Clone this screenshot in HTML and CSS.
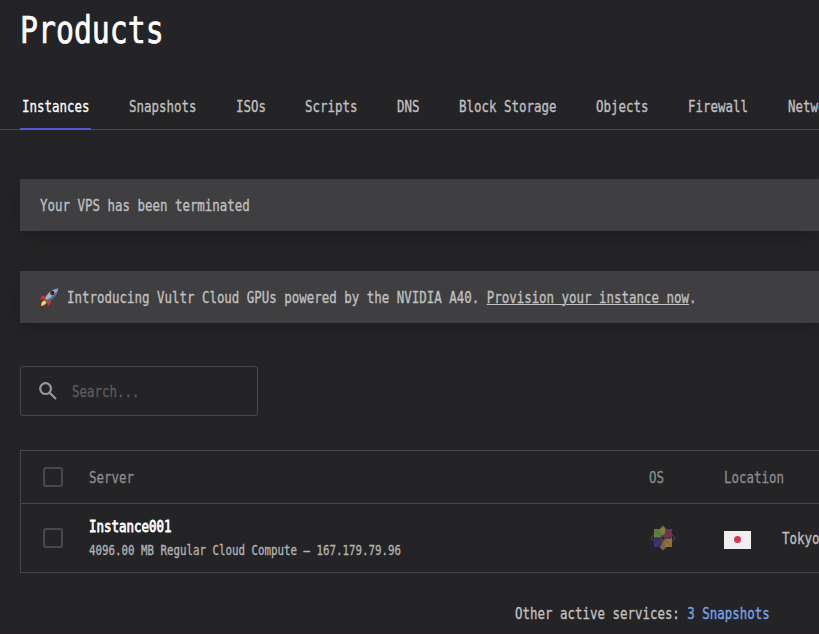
FILE: index.html
```html
<!DOCTYPE html>
<html lang="en">
<head>
<meta charset="utf-8">
<title>Products</title>
<link rel="stylesheet" href="styles.css">
</head>
<body>
<div class="page">
  <h1 class="title"><span class="t">Products</span></h1>
  <nav class="tabs">
    <a class="tab active" style="--n:9"><span class="t">Instances</span></a>
    <a class="tab" style="--n:9"><span class="t">Snapshots</span></a>
    <a class="tab" style="--n:4"><span class="t">ISOs</span></a>
    <a class="tab" style="--n:7"><span class="t">Scripts</span></a>
    <a class="tab" style="--n:3"><span class="t">DNS</span></a>
    <a class="tab" style="--n:13"><span class="t">Block Storage</span></a>
    <a class="tab" style="--n:7"><span class="t">Objects</span></a>
    <a class="tab" style="--n:8"><span class="t">Firewall</span></a>
    <a class="tab" style="--n:7"><span class="t">Network</span></a>
  </nav>
  <div class="banner first"><span class="t">Your VPS has been terminated</span></div>
  <div class="banner second">
    <svg class="rocket" viewBox="0 0 20 20">
      <path d="M6 8.5 2 8 0 12 5 11.5ZM11 13 12 15 9 19 7 15Z" fill="#d92b38"/>
      <path d="M5 12.5Q1 14 1 19Q5 19 7 15Z" fill="#f5bd36"/>
      <path d="M4 14Q2 15 2 18Q4 17 6 15Z" fill="#ffe16b"/>
      <path d="M5 11.5Q9 2 19 .5Q18 10 8 14.5Z" fill="#9ab6ca"/>
      <path d="M8 12Q16 8 19 .5Q18 10 8 14.5L5 11.5Z" fill="#3f6a8c"/>
      <path d="M14.5 1.8 19 .5 18 5Z" fill="#7ea5d6"/>
      <circle cx="13" cy="5.3" r="2.5" fill="#6b2a24"/>
      <circle cx="13.4" cy="5" r="1.3" fill="#1d2027"/>
    </svg>
    <span class="t">Introducing Vultr Cloud GPUs powered by the NVIDIA A40. <a class="provision">Provision your instance now</a>.</span>
  </div>
  <div class="search">
    <svg class="glass" viewBox="0 0 18 18"><circle cx="6.6" cy="6.6" r="5.4"/><path d="M10.5 10.5 17 17"/></svg>
    <span class="t">Search...</span>
  </div>
  <div class="table">
    <div class="row head">
      <i class="check"></i>
      <div><span class="t">Server</span></div>
      <div><span class="t">OS</span></div>
      <div><span class="t">Location</span></div>
    </div>
    <div class="row server">
      <i class="check"></i>
      <div class="info">
        <div class="name"><span class="t">Instance001</span></div>
        <div class="spec"><span class="t">4096.00 MB Regular Cloud Compute – 167.179.79.96</span></div>
      </div>
      <div class="os">
        <svg class="centos" viewBox="0 0 26 26">
          <path d="M13 .5 17 4.5H9ZM13 25.5 17 21.5H9Z" fill="#77693a"/>
          <path d="M.8 13 4.5 9V17ZM25.2 13 21.5 9V17Z" fill="none" stroke="#5d4a68"/>
          <path d="M4 4H12.5V12.5H4Z" fill="#61803f"/>
          <path d="M13.5 4H22V12.5H13.5Z" fill="#7a2f55"/>
          <path d="M4 13.5H12.5V22H4Z" fill="#373172"/>
          <path d="M13.5 13.5H22V22H13.5Z" fill="#96703b"/>
          <path d="M10.5 4 13 2 15 4V8L13 11Z" fill="#86813a"/>
          <path d="M10.5 22 13 24 15 22V18L13 15Z" fill="#6f6a4a"/>
          <path d="M5 5 21 21M21 5 5 21" stroke="#55484d" stroke-width=".7"/>
          <path d="M9 13 13 10 17 13 13 16Z" fill="#4a4150"/>
          <circle cx="13" cy="13" r="1.3" fill="#28232f"/>
        </svg>
      </div>
      <div class="place"><i class="flag"><b></b></i><span class="t">Tokyo</span></div>
    </div>
  </div>
  <div class="other"><span class="t">Other active services: <a>3 Snapshots</a></span></div>
</div>
</body>
</html>
```
FILE: styles.css
```css
* { box-sizing: border-box; }
body {
  margin: 0;
  height: 634px;
  overflow: hidden;
  background: #242426;
  color: #c1c1c2;
  font: 15.45px/20px "DejaVu Sans Mono", monospace;
}
.page {
  height: 634px;
  border-bottom: 2px solid #292127;
  overflow: hidden;
}
/* condensed monospace lettering: half an em per character */
.t {
  display: inline-block;
  white-space: pre;
  transform: scaleX(.8063);
  transform-origin: 0 50%;
  -webkit-text-stroke: .3px currentColor;
}
.title {
  height: 84px;
  margin: 0;
  padding: 11px 0 0 20px;
  color: #fff;
  font-size: 37px;
  font-weight: 400;
  line-height: 40px;
}
.title .t { -webkit-text-stroke-width: .7px; }
.tabs {
  display: flex;
  gap: 36.5px;
  height: 46px;
  padding-left: 20px;
  border-bottom: 1px solid #4a4a4c;
}
.tab {
  flex: none;
  width: calc(var(--n) * 7.5px + 3px);
  height: 46px;
  padding: 13px 0 0 1.5px;
}
.tab.active { color: #fff; border-bottom: 2px solid #5457d6; }
.banner {
  display: flex;
  align-items: center;
  height: 52px;
  margin-left: 20px;
  padding: 1px 0 0 19.5px;
  background: #3f3f41;
  box-shadow: 0 5px 16px rgba(0, 0, 0, .2);
}
.first { margin-top: 49px; }
.second { margin-top: 40px; }
.rocket { flex: none; width: 19px; height: 19px; margin-right: 8px; }
.banner .t { flex: none; }
.provision { text-decoration: underline; text-underline-offset: 1px; text-decoration-thickness: 1px; }
.search {
  display: flex;
  align-items: center;
  width: 238px;
  height: 50px;
  margin: 43px 0 34px 20px;
  padding-left: 18px;
  border: 1px solid #49494b;
  border-radius: 3px;
  color: #5c5c5e;
}
.search .t { margin: 2px 0 0 14.5px; }
.glass { width: 18px; height: 18px; fill: none; stroke: #98989a; stroke-width: 2.2; }
.table {
  width: 820px;
  height: 123px;
  margin-left: 20px;
  border: 1px solid #49494b;
}
.row {
  display: grid;
  grid-template-columns: 67.5px 560.5px 75px 116px;
  align-items: center;
}
.head { height: 53px; border-bottom: 1px solid #49494b; color: #8c8c8e; padding-top: 1px; }
.server { height: 68px; }
.check {
  width: 20px;
  height: 20px;
  margin-left: 22px;
  border: 2px solid #49494b;
  border-radius: 3px;
}
.head .check { margin-top: -2px; }
.head .t { margin-top: 1px; }
.info { padding-top: 1px; }
.name { height: 24px; color: #fff; }
.name .t { -webkit-text-stroke-width: .8px; }
.spec { height: 20px; font-size: 13.4px; color: #b4b4b5; }
.os { padding-left: 1px; }
.centos { display: block; width: 26px; height: 26px; }
.place { display: flex; align-items: center; }
.place .t { margin: 2px 0 0 30.5px; }
.flag {
  display: grid;
  place-items: center;
  width: 27px;
  height: 18px;
  margin-top: 3px;
  background: #efeff1;
}
.flag b { width: 7px; height: 7px; border-radius: 50%; background: #dd354f; }
.other { padding: 31px 0 0 514.5px; }
.other a { color: #78a5ec; }
```
